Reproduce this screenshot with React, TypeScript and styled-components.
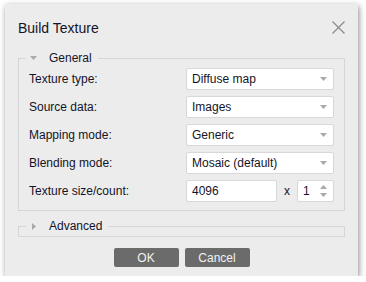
import styled, { createGlobalStyle } from "styled-components";

const GlobalStyle = createGlobalStyle`
    html, body {
        margin: 0;
        background: #fff;
    }
    body {
        font-family: "Liberation Sans", Arial, sans-serif;
        color: #141428;
    }
`;

const Dialog = styled.div`
    margin: 4px 0 0 5px;
    width: 353px;
    height: 272px;
    box-sizing: border-box;
    background: #ececec;
    box-shadow: 1px 2px 6px rgba(0, 0, 0, 0.45);
    display: flex;
    flex-direction: column;
    padding: 0 13px;
`;
const TitleBar = styled.div`
    height: 47px;
    display: flex;
    align-items: center;
    justify-content: space-between;
`;
const Title = styled.h1`
    margin: 0;
    font-size: 14px;
    font-weight: normal;
`;
const CloseBtn = styled.button`
    width: 13px;
    height: 13px;
    padding: 0;
    border: none;
    background: none;
    display: flex;
`;
const Group = styled.fieldset<{ $collapsed?: boolean }>`
    margin: ${(p) => (p.$collapsed ? "8px 0 0" : "0")};
    border: 1px solid #d6d6d6;
    padding: ${(p) => (p.$collapsed ? "0 10px 3px" : "3px 10px 8px")};
    min-width: 0;
`;
const Legend = styled.legend`
    margin-left: -3px;
    padding: 0 6px 0 4px;
    height: 14px;
    line-height: 14px;
    font-size: 12px;
    display: flex;
    align-items: center;
`;
const Arrow = styled.span`
    width: 7px;
    display: flex;
    justify-content: center;
    margin-right: 12px;
`;
const Rows = styled.div`
    display: grid;
    grid-template-columns: 157px 148px;
    row-gap: 6px;
    align-items: center;
`;
const Label = styled.label`
    font-size: 12px;
`;
const Field = styled.div<{ $width?: number }>`
    width: ${(p) => (p.$width ? `${p.$width}px` : "100%")};
    height: 22px;
    box-sizing: border-box;
    background: #fff;
    border: 1px solid #d8d8d8;
    border-radius: 2px;
    display: flex;
    align-items: center;
    justify-content: space-between;
    padding: 0 6px 0 5px;
    font-size: 12px;
`;
const SizeRow = styled.div`
    display: flex;
    align-items: center;
    gap: 7px;
    font-size: 12px;
`;
const Spin = styled.div`
    display: flex;
    flex-direction: column;
    gap: 4px;
`;
const Buttons = styled.div`
    display: flex;
    justify-content: center;
    gap: 6px;
    margin-top: 11px;
`;
const Button = styled.button`
    width: 65px;
    height: 19px;
    border: none;
    border-radius: 2px;
    background: #6b6b6b;
    color: #f2f2f2;
    font-family: "Liberation Sans", Arial, sans-serif;
    font-size: 12px;
    padding: 0;
`;

const Caret = ({ dir = "down" }: { dir?: "down" | "up" | "right" }) => {
    if (dir === "right")
        return (
            <svg width="4" height="7" viewBox="0 0 4 7">
                <path d="M0 0 L4 3.5 L0 7 Z" fill="#a9a9a9" />
            </svg>
        );
    return (
        <svg width="7" height="4" viewBox="0 0 7 4">
            <path d={dir === "down" ? "M0 0 H7 L3.5 4 Z" : "M0 4 H7 L3.5 0 Z"} fill="#a9a9a9" />
        </svg>
    );
};

const Select = ({ value }: { value: string }) => (
    <Field>
        <span>{value}</span>
        <Caret />
    </Field>
);

const rows = [
    ["Texture type:", "Diffuse map"],
    ["Source data:", "Images"],
    ["Mapping mode:", "Generic"],
    ["Blending mode:", "Mosaic (default)"],
];

const App = () => {
    return (
        <>
            <GlobalStyle />
            <Dialog>
                <TitleBar>
                    <Title>Build Texture</Title>
                    <CloseBtn aria-label="Close">
                        <svg width="13" height="13" viewBox="0 0 13 13">
                            <path d="M0.5 0.5 L12.5 12.5 M12.5 0.5 L0.5 12.5" stroke="#8c8c8c" strokeWidth="1.3" />
                        </svg>
                    </CloseBtn>
                </TitleBar>
                <Group>
                    <Legend>
                        <Arrow><Caret /></Arrow>
                        General
                    </Legend>
                    <Rows>
                        {rows.map(([label, value]) => (
                            <>
                                <Label key={label}>{label}</Label>
                                <Select key={value} value={value} />
                            </>
                        ))}
                        <Label>Texture size/count:</Label>
                        <SizeRow>
                            <Field $width={91}>4096</Field>
                            <span>x</span>
                            <Field $width={37}>
                                <span>1</span>
                                <Spin>
                                    <Caret dir="up" />
                                    <Caret />
                                </Spin>
                            </Field>
                        </SizeRow>
                    </Rows>
                </Group>
                <Group $collapsed>
                    <Legend>
                        <Arrow><Caret dir="right" /></Arrow>
                        Advanced
                    </Legend>
                </Group>
                <Buttons>
                    <Button>OK</Button>
                    <Button>Cancel</Button>
                </Buttons>
            </Dialog>
        </>
    );
};

export default App;
